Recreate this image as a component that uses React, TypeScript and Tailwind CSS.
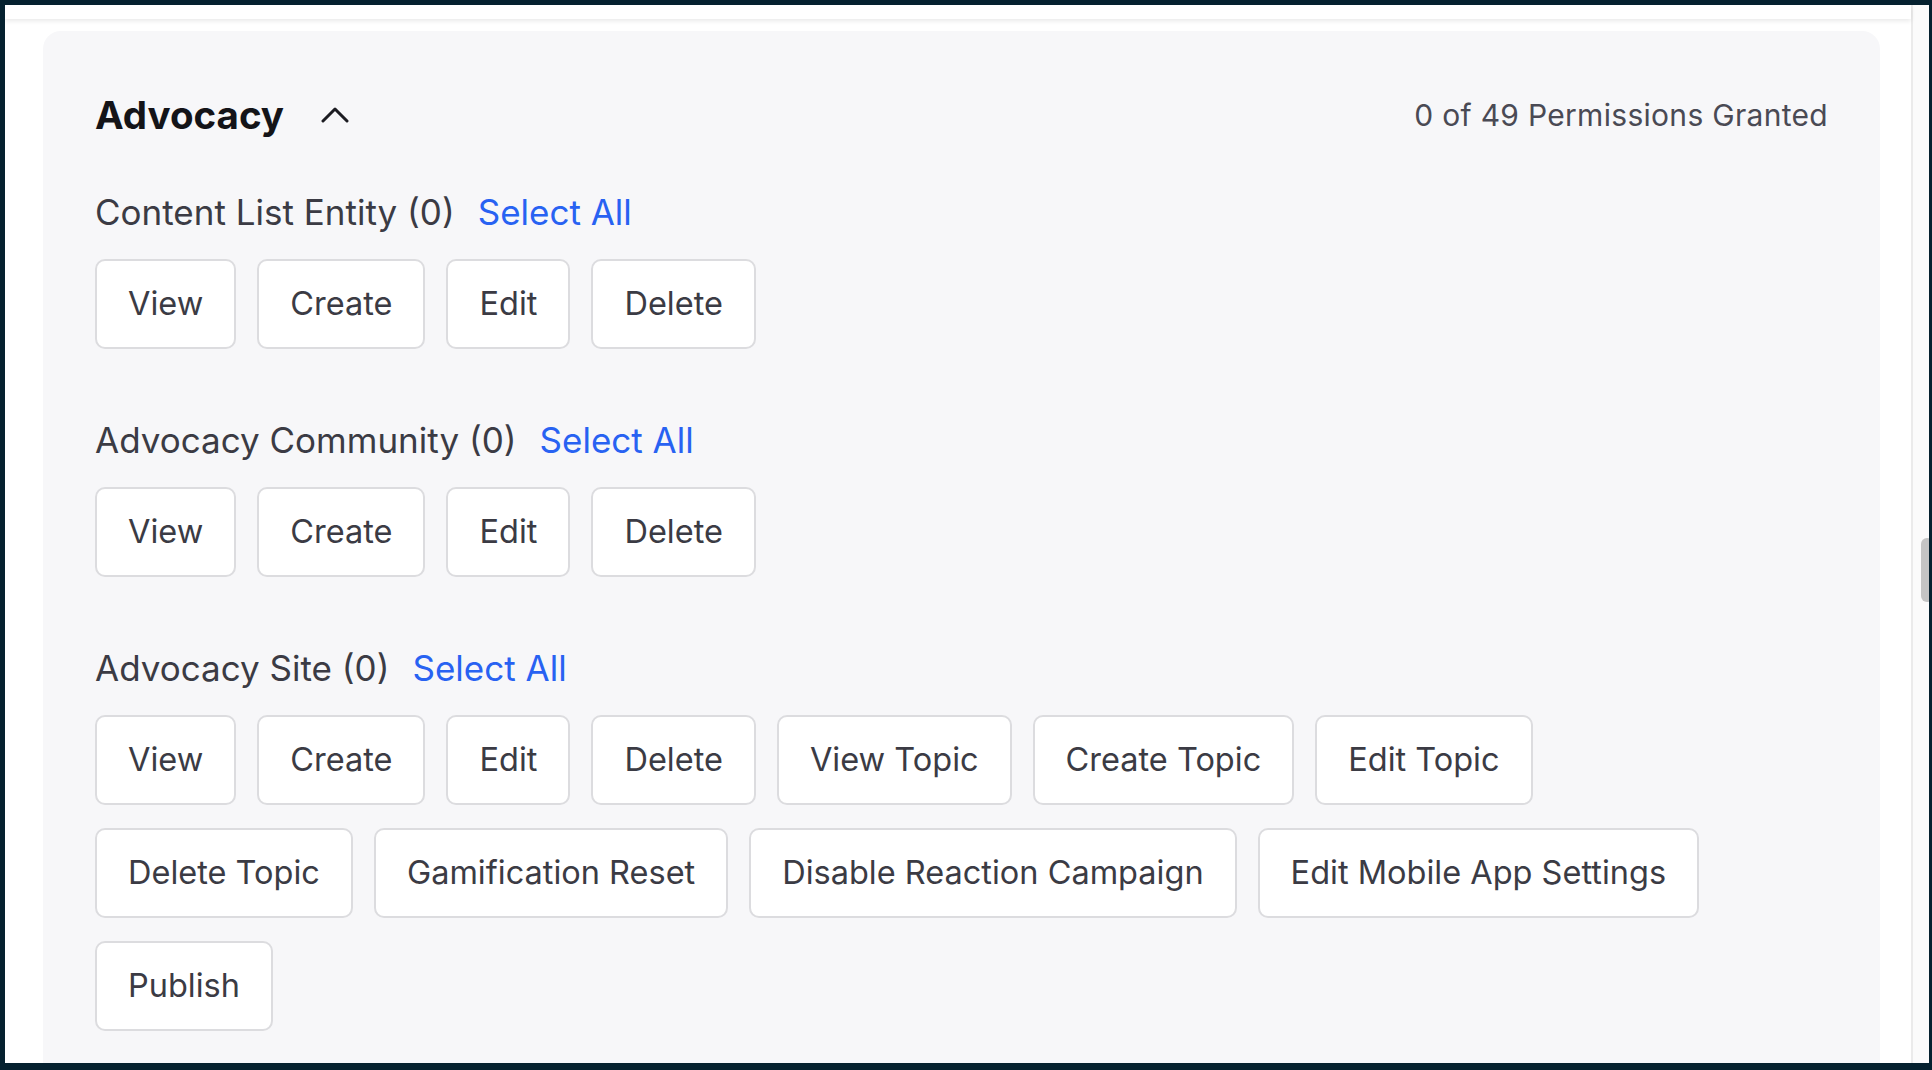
import React from "react";

type Group = { title: string; perms: string[] };

const basic = ["View", "Create", "Edit", "Delete"];

const groups: Group[] = [
	{ title: "Content List Entity", perms: basic },
	{ title: "Advocacy Community", perms: basic },
	{
		title: "Advocacy Site",
		perms: [
			...basic,
			"View Topic",
			"Create Topic",
			"Edit Topic",
			"Delete Topic",
			"Gamification Reset",
			"Disable Reaction Campaign",
			"Edit Mobile App Settings",
			"Publish",
		],
	},
];

function PermissionButton({ label }: { label: string }) {
	return (
		<button
			className="h-[90px] px-[31px] rounded-[10px] border-2 border-[#dcdcdf] bg-white text-[32.5px] leading-none text-[#3b3b44]"
			type="button"
		>
			{label}
		</button>
	);
}

function PermissionGroup({ group }: { group: Group }) {
	return (
		<div>
			<div className="flex items-center h-[40px] text-[35px] leading-[40px]">
				<span className="text-[#3b3b44]">{group.title} (0)</span>
				<button className="ml-[23px] text-[#2862f2]" type="button">
					Select All
				</button>
			</div>
			<div className="mt-[27px] max-w-[1660px] flex flex-wrap gap-x-[21px] gap-y-[23px]">
				{group.perms.map((p) => (
					<PermissionButton key={p} label={p} />
				))}
			</div>
		</div>
	);
}

export default function App() {
	return (
		<div className="w-[1932px] h-[1070px] bg-[#05212f] pt-[5px] pl-[5px] pr-[3px] pb-[7px] overflow-hidden font-['Inter',_'Noto_Sans',_sans-serif]">
			<div className="h-full bg-white flex overflow-hidden">
				<div className="flex-1 min-w-0 flex flex-col">
					<div className="h-[14px] shrink-0 bg-white shadow-[0_2px_5px_rgba(0,0,0,0.09)] relative z-10" />
					<div className="flex-1 min-h-0 pl-[38px] pr-[31px] pt-[12px] overflow-hidden">
						<div className="h-full bg-[#f7f7f9] rounded-t-[18px] px-[52px] pt-[60px]">
							<div className="flex items-center justify-between h-[48px]">
								<div className="flex items-center">
									<h2 className="text-[38.5px] leading-[48px] font-bold text-[#141418]">
										Advocacy
									</h2>
									<svg
										className="ml-[37px] mt-[-2px]"
										width="28"
										height="17"
										viewBox="0 0 28 17"
										fill="none"
									>
										<polyline
											points="2,15 14,3 26,15"
											stroke="#1c1c22"
											strokeWidth="3"
											strokeLinecap="round"
											strokeLinejoin="round"
										/>
									</svg>
								</div>
								<span className="text-[30px] tracking-[0.3px] text-[#4a4a54]">
									0 of 49 Permissions Granted
								</span>
							</div>
							<div className="mt-[53px] flex flex-col gap-[71px]">
								{groups.map((g) => (
									<PermissionGroup key={g.title} group={g} />
								))}
							</div>
						</div>
					</div>
				</div>
				<div className="w-[18px] shrink-0 border-l-2 border-[#ebebeb] bg-[#fbfbfb] pt-[533px] pl-[8px]">
					<div className="w-[12px] h-[64px] rounded-full bg-[#c4c4c4]" />
				</div>
			</div>
		</div>
	);
}
